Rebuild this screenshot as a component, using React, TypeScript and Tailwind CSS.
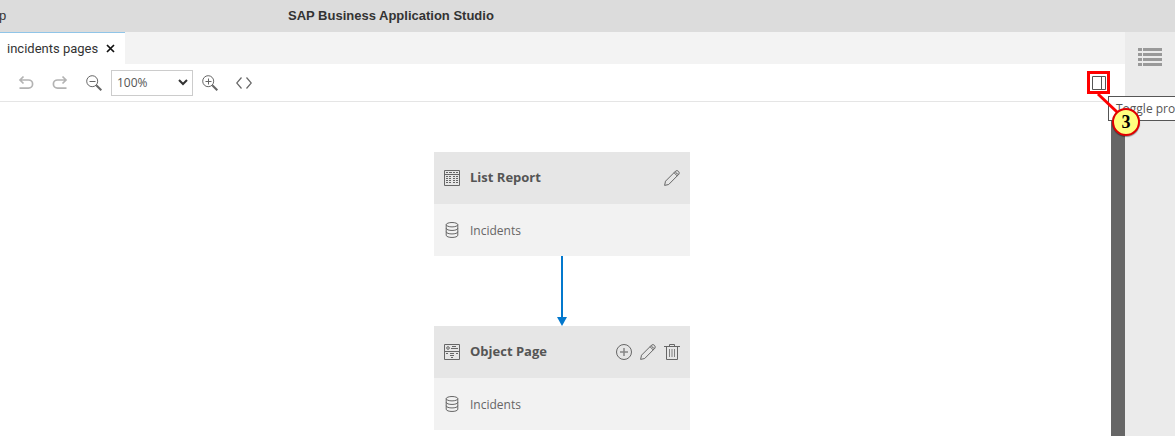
import React from 'react';

type IconProps = { className?: string };

const Svg = ({ className = '', children }: React.PropsWithChildren<IconProps>) => (
  <svg width="16" height="16" viewBox="0 0 16 16" fill="none" stroke="currentColor" className={`shrink-0 ${className}`}>
    {children}
  </svg>
);

const UndoIcon = ({ className = '' }: IconProps) => (
  <Svg className={className}>
    <path d="M5.5 1.5 2 5l3.500 3.500M2 5h8.500a4 4 0 0 1 0 8.200H1.500" strokeWidth="1.700" />
  </Svg>
);

const ZoomIcon = ({ plus }: { plus?: boolean }) => (
  <Svg className="text-[#666]">
    <circle cx="6.200" cy="6.200" r="5.500" />
    <path d={plus ? 'M3.500 6.500h6M6.500 3.500v6' : 'M3.500 6.500h6'} />
    <path d="m10.300 10.300 5 5" strokeWidth="2" />
  </Svg>
);

const CodeIcon = () => (
  <Svg className="text-[#666]">
    <path d="M5.500 2.500.700 8l4.800 5.500M10.500 2.500 15.300 8l-4.800 5.500" strokeWidth="1.200" />
  </Svg>
);

const TableIcon = () => (
  <Svg>
    <path d="M.5.500h15v15H.5zM.5 4.500h15" />
    <path d="M2 2.500h2M5 2.500h3M9 2.500h2M12 2.500h2M2 6.500h2M5 6.500h2M9 6.500h2M12 6.500h2M2 8.500h2M5 8.500h2M9 8.500h2M12 8.500h2M2 10.500h2M5 10.500h2M9 10.500h2M12 10.500h2M2 12.500h2M5 12.500h2M9 12.500h2M12 12.500h2" />
  </Svg>
);

const FormIcon = () => (
  <Svg>
    <path d="M.5.500h15v15H.5zM.5 7.500h15" />
    <circle cx="4" cy="4" r="1.300" />
    <path d="M8 2.500h4M7 4.500h7M2 9.500h2M6 9.500h4M12 9.500h2M6 11.500h4M7 13.500h2" />
  </Svg>
);

const DatabaseIcon = () => (
  <Svg>
    <ellipse cx="8" cy="2.700" rx="5.800" ry="2.200" />
    <path d="M2.200 2.700v10.500c0 3 11.600 3 11.600 0V2.700M2.200 6.200c0 3 11.600 3 11.600 0M2.200 9.700c0 3 11.600 3 11.600 0" />
  </Svg>
);

const PencilIcon = () => (
  <Svg>
    <path d="m.6 15.400.9-4.200L11.600 1.100q1.500-1.200 2.900.3t.3 2.900L4.700 14.500zM10 2.700l3.400 3.400M11.300 1.500q.7 2.400 3.300 3" />
  </Svg>
);

const AddIcon = () => (
  <Svg>
    <circle cx="8" cy="8" r="7.500" />
    <path d="M4 8h8M8 4v8" strokeWidth="1.500" opacity=".75" />
  </Svg>
);

const TrashIcon = () => (
  <Svg>
    <path d="M0 2.500h16M5.500 2.500v-2h5v2M2.500 2.500v13h11v-13" />
    <path d="M5.500 5v8M8 5v8M10.500 5v8" opacity=".8" />
  </Svg>
);

const PageCard = ({ title, icon, actions }: { title: string; icon: React.ReactNode; actions: React.ReactNode }) => (
  <section className="w-64 text-[#666]">
    <header className="flex h-[52px] items-center bg-[#e6e6e6] px-[10px]">
      {icon}
      <h2 className="ml-[10px] grow text-[13px] font-bold text-[#555]">{title}</h2>
      <div className="flex gap-2">{actions}</div>
    </header>
    <div className="flex h-[52px] items-center bg-[#f2f2f2] px-[10px]">
      <DatabaseIcon />
      <span className="ml-[10px] pt-px text-[12px]">Incidents</span>
    </div>
  </section>
);

export default function App() {
  return (
    <div className="relative flex h-[436px] w-[1175px] flex-col overflow-hidden bg-white font-['Open_Sans',sans-serif]">
      <header className="flex h-8 shrink-0 items-center bg-[#dcdcdc] font-['Liberation_Sans',sans-serif] text-[13px] text-[#333]">
        <span className="-ml-px w-[289px]">p</span>
        <h1 className="font-bold">SAP Business Application Studio</h1>
      </header>
      <div className="flex min-h-0 grow">
        <main className="flex w-[1125px] flex-col">
          <nav className="flex h-8 shrink-0 bg-[#f3f3f3] font-['Roboto',sans-serif] text-[13px] text-[#333]">
            <div className="flex w-[125px] items-center border-t border-[#90c5e8] bg-white pl-[7px]">
              <span className="w-[99px] whitespace-nowrap">incidents pages</span>
              <svg width="9" height="9" viewBox="0 0 9 9" stroke="#111" strokeWidth="1.700">
                <path d="m1 1 7 7M8 1 1 8" />
              </svg>
            </div>
          </nav>
          <div className="flex h-[38px] shrink-0 items-center border-b border-[#e5e5e5] pl-[18px]">
            <UndoIcon className="text-[#b3b3b3]" />
            <UndoIcon className="ml-[18px] -scale-x-100 text-[#b3b3b3]" />
            <div className="ml-[18px]"><ZoomIcon /></div>
            <div className="ml-[9px] flex h-[26px] w-[82px] items-center justify-between border border-[#ccc] pl-[5px] pr-1 text-[12px] text-[#555]">
              <span>100%</span>
              <svg width="10" height="7" viewBox="0 0 10 7" fill="none" stroke="#333" strokeWidth="2">
                <path d="m1 1 4 4 4-4" />
              </svg>
            </div>
            <div className="ml-[9px]"><ZoomIcon plus /></div>
            <div className="ml-[18px]"><CodeIcon /></div>
            <button className="ml-auto mr-[15px] flex h-[23px] w-[23px] items-center justify-center border-[3px] border-[#f00] text-[#555]">
              <svg width="14" height="14" viewBox="0 0 14 14" fill="none" stroke="currentColor">
                <path d="M.5.500h13v13H.5zM9.500.500v13" />
              </svg>
            </button>
          </div>
          <div className="flex min-h-0 grow">
            <div className="flex grow flex-col pl-[434px] pt-[50px]">
              <PageCard title="List Report" icon={<TableIcon />} actions={<PencilIcon />} />
              <svg className="ml-[122px] shrink-0" width="12" height="70" viewBox="0 0 12 70">
                <path d="M6 0v62" stroke="#0378cd" strokeWidth="2" />
                <path d="M1 61h10L6 70z" fill="#0378cd" />
              </svg>
              <PageCard title="Object Page" icon={<FormIcon />} actions={<><AddIcon /><PencilIcon /><TrashIcon /></>} />
            </div>
            <div className="w-[14px] bg-[#666]" />
          </div>
        </main>
        <aside className="flex w-[50px] justify-center bg-[#ebebeb] pt-4">
          <svg width="24" height="18" viewBox="0 0 24 18" fill="none" stroke="#999" strokeWidth="3">
            <path d="M0 1.500h4M5 1.500h19M0 6.500h4M5 6.500h19M0 11.500h4M5 11.500h19M0 16.500h4M5 16.500h19" />
          </svg>
        </aside>
      </div>
      <div className="absolute left-[1108px] top-24 flex h-[25px] w-40 items-center border border-[#555] bg-white pl-[7px] text-[12px] text-[#555]">
        Toggle properties
      </div>
      <svg className="absolute left-[1094px] top-[92px]" width="48" height="46" viewBox="0 0 48 46">
        <path d="m4 2 19 18" stroke="#f00" strokeWidth="3" />
      </svg>
      <div className="absolute left-[1112px] top-[108px] flex h-7 w-7 items-center justify-center rounded-full border-2 border-[#e00000] bg-[#ffff80] font-['Liberation_Serif',serif] text-[18px] font-bold leading-none text-black shadow-[0_1px_1px_#0006]">
        3
      </div>
    </div>
  );
}
